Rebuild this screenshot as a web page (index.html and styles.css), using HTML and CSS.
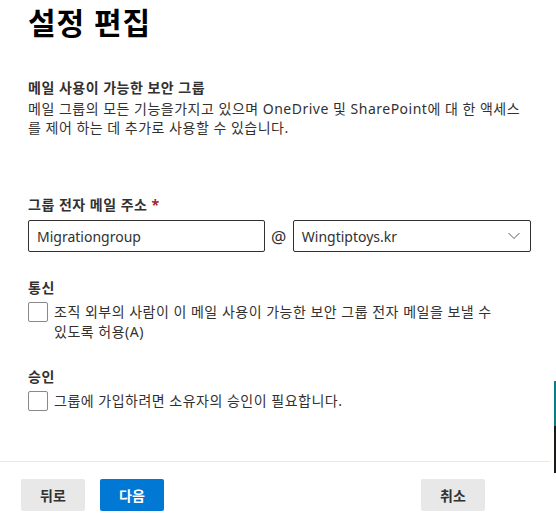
FILE: index.html
```html
<!DOCTYPE html>
<html lang="ko">
<head>
    <meta charset="UTF-8">
    <meta name="viewport" content="width=device-width, initial-scale=1.0">
    <title>설정 편집</title>
    <link rel="stylesheet" href="styles.css">
</head>
<body>

    <div class="panel">
        <div class="content">
            <h1>설정 편집</h1>

            <div class="group-type">
                <div class="group-title">메일 사용이 가능한 보안 그룹</div>
                <p>메일 그룹의 모든 기능을가지고 있으며 OneDrive 및 SharePoint에 대 한 액세스를 제어 하는 데 추가로 사용할 수 있습니다.</p>
            </div>

            <div class="field">
                <label class="field-label">그룹 전자 메일 주소 <span class="required">*</span></label>
                <div class="address-row">
                    <input type="text" class="text-input" value="Migrationgroup">
                    <span class="at">@</span>
                    <div class="dropdown">
                        <span>Wingtiptoys.kr</span>
                        <svg width="12" height="8" viewBox="0 0 12 8"><path d="M0.5 1 L6 6.5 L11.5 1" fill="none" stroke="#605e5c" stroke-width="1"/></svg>
                    </div>
                </div>
            </div>

            <div class="section">
                <div class="section-title">통신</div>
                <label class="check">
                    <span class="box"></span>
                    <span class="check-text">조직 외부의 사람이 이 메일 사용이 가능한 보안 그룹 전자 메일을 보낼 수 있도록 허용(A)</span>
                </label>
            </div>

            <div class="section approval">
                <div class="section-title">승인</div>
                <label class="check">
                    <span class="box"></span>
                    <span class="check-text">그룹에 가입하려면 소유자의 승인이 필요합니다.</span>
                </label>
            </div>
        </div>

        <div class="footer">
            <button class="btn">뒤로</button>
            <button class="btn primary">다음</button>
            <button class="btn cancel">취소</button>
        </div>

        <div class="scroll-mark"></div>
    </div>

</body>
</html>
```

FILE: styles.css
```css
body {
    margin: 0;
    padding: 0;
    font-family: "Noto Sans", "Noto Sans CJK KR", sans-serif;
    font-size: 14px;
    letter-spacing: 0.5px;
    color: #323130;
    background-color: #ffffff;
}

.panel {
    position: relative;
    height: 519px;
    overflow: hidden;
}

.content {
    padding: 0 25px 0 28px;
    height: 461px;
    box-sizing: border-box;
}

h1 {
    margin: 0;
    padding-top: 4px;
    font-size: 30px;
    line-height: 38px;
    font-weight: 700;
    letter-spacing: 1px;
    color: #000000;
}

.group-type {
    margin-top: 36px;
}

.group-title {
    font-weight: 700;
    line-height: 19px;
}

.group-type p {
    margin: 2px 0 0;
    line-height: 19px;
}

.field {
    margin-top: 58px;
}

.field-label {
    display: block;
    font-weight: 700;
    line-height: 19px;
    margin-bottom: 6px;
}

.required {
    color: #a4262c;
}

.address-row {
    display: flex;
    align-items: center;
    gap: 6px;
}

.text-input,
.dropdown {
    height: 32px;
    box-sizing: border-box;
    border: 1px solid #323130;
    border-radius: 2px;
    font-family: inherit;
    font-size: 14px;
    letter-spacing: 0;
    color: #323130;
    padding: 0 8px;
}

.text-input {
    width: 237px;
    outline: none;
}

.at {
    font-size: 17px;
    color: #323130;
}

.dropdown {
    flex: 1;
    display: flex;
    align-items: center;
    justify-content: space-between;
    padding-right: 10px;
}

.section {
    margin-top: 26px;
}

.section-title {
    font-weight: 700;
    line-height: 19px;
    margin-bottom: 5px;
}

.check {
    display: flex;
    align-items: flex-start;
    gap: 6px;
}

.box {
    flex: none;
    width: 20px;
    height: 20px;
    box-sizing: border-box;
    border: 1px solid #8a8886;
    border-radius: 2px;
}

.check-text {
    line-height: 20px;
    padding-right: 10px;
    word-break: keep-all;
}

.approval {
    margin-top: 25px;
}

.footer {
    display: flex;
    gap: 15px;
    border-top: 1px solid #e8e8e8;
    margin-right: 6px;
    padding: 17px 0 0 21px;
}

.btn {
    width: 64px;
    height: 32px;
    border: none;
    border-radius: 2px;
    background-color: #e8e8e8;
    font-family: inherit;
    font-size: 14px;
    font-weight: 600;
    color: #323130;
}

.btn.primary {
    background-color: #0078d4;
    color: #ffffff;
}

.btn.cancel {
    margin-left: auto;
    margin-right: 65px;
}

/* page scroll indicator on the right edge */
.scroll-mark {
    position: absolute;
    right: 0;
    top: 381px;
    width: 2px;
    height: 92px;
    background: linear-gradient(#0e7c86 0 49%, #1b1a19 49% 100%);
}
```
